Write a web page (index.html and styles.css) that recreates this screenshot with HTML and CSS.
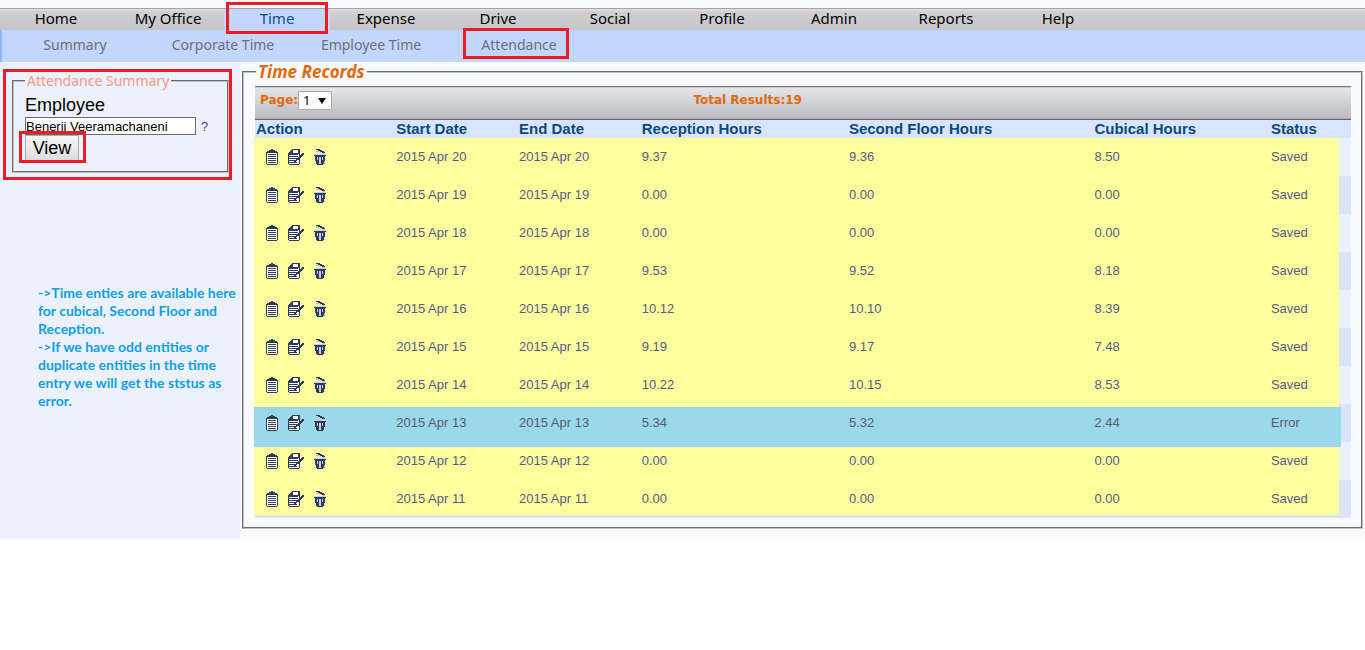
FILE: index.html
```html
<!DOCTYPE html>
<html lang="en">
<head>
<meta charset="utf-8">
<title>Time Records</title>
<link rel="stylesheet" href="styles.css">
</head>
<body>
<svg class="sprite" aria-hidden="true">
  <symbol id="i-view" viewBox="0 0 12 16">
    <path fill="#2f3b58" d="M5 0h2v1h2v1h2v1h1v12h-1v1H1v-1H0V3h1V2h2V1h2z"/>
    <path fill="#fff" d="M1 4h10v11H1z"/>
    <path fill="#2f3b58" d="M2 5h8v1H2zM2 7h8v1H2zM2 9h8v1H2zM2 11h8v1H2zM2 13h8v1H2z"/>
  </symbol>
  <symbol id="i-edit" viewBox="0 0 16 16">
    <path fill="#2f3b58" d="M4 0h8v15h-1v1H1v-1H0V4h1V3h1V2h1V1h1z"/>
    <path fill="#fff" d="M5 1h5v3H5zM1 5h10v10H1z"/>
    <path fill="#2f3b58" d="M1 5h9v1H1zM1 7h9v1H1zM1 9h8v1H1zM1 11h6v1H1zM1 13h8v1H1z"/>
    <path fill="#2f3b58" d="M14 4h2v2h-1v1h-1v1h-1v1h-1v1h-1v1H9v1H8v1H6v-1h1v-1h1v-1h1V9h1V8h1V7h1V6h1V5h1z"/>
  </symbol>
  <symbol id="i-delete" viewBox="0 0 12 16">
    <path fill="#c3cbe0" d="M2 1h2v1h2v1h3v1h2v1H8V4H5V3H2zM0 5h12v1H0zM1 8h10v7H2z"/>
    <path fill="#2f3b58" d="M2 0h4v1h2v1h2v1h1v1H8V3H6V2H4V1H2zM0 6h12v1h-1v1H1V7H0zM1 8h2v3h1v4H2v-3H1zM4 8h1v7H4zM7 8h1v7H7zM9 8h2v4h-1v3H8v-4h1zM3 15h6v1H3z"/>
  </symbol>
</svg>
<div class="app">
  <nav class="menu" aria-label="Main">
    <a href="#">Home</a>
    <a href="#">My Office</a>
    <a href="#" class="active">Time<span class="callout callout-time"></span></a>
    <a href="#">Expense</a>
    <a href="#">Drive</a>
    <a href="#">Social</a>
    <a href="#">Profile</a>
    <a href="#">Admin</a>
    <a href="#">Reports</a>
    <a href="#">Help</a>
  </nav>
  <nav class="submenu" aria-label="Time">
    <a href="#">Summary</a>
    <a href="#">Corporate Time</a>
    <a href="#">Employee Time</a>
    <a href="#">Attendance<span class="callout callout-attendance"></span></a>
  </nav>
  <div class="content">
    <aside class="sidebar">
      <form class="search">
        <fieldset class="panel search-panel">
          <legend>Attendance Summary</legend>
          <label for="employee">Employee</label>
          <div class="field">
            <input id="employee" type="text" value="Benerji Veeramachaneni">
            <a href="#" class="help">?</a>
          </div>
          <div class="submit">
            <button type="button">View</button>
            <span class="callout callout-view"></span>
          </div>
        </fieldset>
        <span class="callout callout-search"></span>
      </form>
      <div class="notes">
        <p>-&gt;Time enties are available here for cubical, Second Floor and Reception.</p>
        <p>-&gt;If we have odd entities or duplicate entities in the time entry we will get the ststus as error.</p>
      </div>
    </aside>
    <main class="main">
      <fieldset class="panel records">
        <legend>Time Records</legend>
        <div class="toolbar">
          <div class="pager">
            <label for="page">Page:</label>
            <span class="select"><select id="page"><option>1</option><option>2</option></select></span>
          </div>
          <div>Total Results:19</div>
        </div>
        <div class="grid">
          <div class="mark mark-all"></div>
          <div class="mark mark-error"></div>
          <table>
            <colgroup>
              <col class="c-action"><col class="c-start"><col class="c-end"><col class="c-reception"><col class="c-second"><col class="c-cubical"><col>
            </colgroup>
            <thead>
              <tr><th>Action</th><th>Start Date</th><th>End Date</th><th>Reception Hours</th><th>Second Floor Hours</th><th>Cubical Hours</th><th>Status</th></tr>
            </thead>
            <tbody id="rows"></tbody>
          </table>
        </div>
      </fieldset>
    </main>
  </div>
</div>
<script src="records.js"></script>
</body>
</html>
```
FILE: records.js
```js
const records = [
  ["2015 Apr 20", "9.37", "9.36", "8.50", "Saved"],
  ["2015 Apr 19", "0.00", "0.00", "0.00", "Saved"],
  ["2015 Apr 18", "0.00", "0.00", "0.00", "Saved"],
  ["2015 Apr 17", "9.53", "9.52", "8.18", "Saved"],
  ["2015 Apr 16", "10.12", "10.10", "8.39", "Saved"],
  ["2015 Apr 15", "9.19", "9.17", "7.48", "Saved"],
  ["2015 Apr 14", "10.22", "10.15", "8.53", "Saved"],
  ["2015 Apr 13", "5.34", "5.32", "2.44", "Error"],
  ["2015 Apr 12", "0.00", "0.00", "0.00", "Saved"],
  ["2015 Apr 11", "0.00", "0.00", "0.00", "Saved"]
];
const icon = (name, width) =>
  `<button type="button" aria-label="${name}"><svg width="${width}" height="16"><use href="#i-${name}"/></svg></button>`;
document.getElementById("rows").innerHTML = records.map(([date, ...rest]) =>
  `<tr class="${rest[3].toLowerCase()}"><td><div class="actions">${icon("view", 12)}${icon("edit", 16)}${icon("delete", 12)}</div></td>` +
  [date, date, ...rest].map(v => `<td>${v}</td>`).join("") + "</tr>").join("");
```
FILE: styles.css
```css
* { box-sizing: border-box; }
body {
  margin: 0;
  background: #fff;
  font-family: "Liberation Sans", Arial, sans-serif;
  color: #000;
}
a { text-decoration: none; color: inherit; }
.sprite { display: none; }
.app { background: #fafbff; padding-top: 8px; }

.menu {
  display: flex;
  height: 22px;
  border-top: 1px solid #a5a5a7;
  background: linear-gradient(#dcdcde 0, #dcdcde 2px, #d0d0d3 2px, #c6c6ca 100%);
  font: 15px/18px "Noto Sans", Tahoma, sans-serif;
}
.menu a {
  position: relative;
  width: 112px;
  text-align: center;
}
.menu .active { width: 106px; background: #c3d6ff; color: #0f4f86; }

.submenu {
  display: flex;
  height: 32px;
  padding-left: 1px;
  background: linear-gradient(90deg, #7fa6f8, #c3d6ff 3px);
  font: 14px/30px "Noto Sans", Tahoma, sans-serif;
  color: #6b6f78;
}
.submenu a {
  position: relative;
  width: 148px;
  text-align: center;
}

.callout {
  position: absolute;
  border: 3px solid #ed1c24;
  pointer-events: none;
}
.callout-time { inset: -7px 2px -4px 2px; z-index: 3; }
.callout-attendance { inset: -2px 24px 3px 18px; z-index: 3; }
.callout-search { inset: 0; }
.callout-view { inset: -4px -7px -1px -6px; }

.content { display: flex; }
.sidebar {
  flex: 0 0 240px;
  background: #edf1fd;
  padding: 7px 0 0 3px;
}
.panel {
  margin: 0;
  min-width: 0;
  border: 2px groove #c0c0c0;
}
.search {
  position: relative;
  width: 229px;
  padding: 3px 3px 7px 9px;
}
.search-panel { padding: 3px 11px 8px; height: 101px; }
.search-panel legend {
  padding: 0 2px;
  font: 14px/18px "Noto Sans", Tahoma, sans-serif;
  color: #f39a7e;
}
.search-panel label { display: block; font-size: 18px; line-height: 24px; }
.field { display: flex; align-items: center; gap: 5px; }
.field input {
  width: 171px;
  height: 18px;
  padding: 0;
  border: 1px solid #6b6b6b;
  background: #fff;
  font: 13px "Liberation Sans", Arial, sans-serif;
}
.help { font-size: 13px; color: #3b4a8c; }
.submit { position: relative; width: 54px; }
.submit button {
  display: block;
  width: 54px;
  height: 27px;
  padding: 0;
  border: 1px solid #a9a9a9;
  background: linear-gradient(#f6f6f6, #dcdcdc);
  font: 18px "Liberation Sans", Arial, sans-serif;
}
.notes {
  padding: 104px 0 0 35px;
  font: bold 14px/18px Lato, Calibri, sans-serif;
  color: #109fe6;
}
.notes p { margin: 0; }

.main { flex: 1; min-width: 0; padding: 0 2px 10px 2px; }
.records { padding: 4px 10px 9px 11px; }
.records legend {
  padding: 0 2px;
  margin-left: 1px;
  font: italic bold 17px/20px "Noto Sans", Tahoma, sans-serif;
  color: #e16a0a;
}
.toolbar {
  display: grid;
  grid-template-columns: 40% 1fr;
  height: 34px;
  border-top: 1px solid #77777b;
  border-bottom: 1px solid #67676b;
  box-shadow: inset 0 1px #c8c8cc, inset 0 -1px #a9a9ae;
  background: linear-gradient(#e6e7eb, #babbc0);
  font: bold 12px/26px "DejaVu Sans", Verdana, sans-serif;
  color: #e16a0a;
}
.pager { display: flex; align-items: center; height: 26px; padding-left: 5px; }
.select { position: relative; display: flex; }
.select::after {
  content: "";
  position: absolute;
  top: 7px;
  right: 6px;
  border: solid transparent;
  border-width: 6px 4px 0;
  border-top-color: #000;
  pointer-events: none;
}
.select select {
  appearance: none;
  width: 34px;
  height: 19px;
  padding: 0 4px;
  border: 1px solid #a9a9a9;
  border-radius: 1px;
  background: #fff;
  font: 13px/16px "Noto Sans", Tahoma, sans-serif;
}

.grid { position: relative; }
.grid table { width: 100%; border-collapse: collapse; table-layout: fixed; }
.c-action { width: 12.8%; }
.c-start { width: 11.2%; }
.c-end { width: 11.2%; }
.c-reception { width: 18.9%; }
.c-second { width: 22.4%; }
.c-cubical { width: 16.1%; }
.grid th {
  height: 18px;
  padding: 0 0 0 1px;
  background: #d9e4ff;
  text-align: left;
  white-space: nowrap;
  font-size: 15px;
  line-height: 18px;
  color: #0b4a7d;
}
.grid td {
  position: relative;
  z-index: 2;
  height: 38px;
  padding: 0 0 0 1px;
  font-size: 13px;
  line-height: 16px;
  color: #535b88;
}
.grid tbody tr { background: #edf1fd; }
.grid tbody tr:nth-child(even) { background: #d9e4ff; }
.grid .error td { color: #5c5a6e; }
.actions { display: flex; gap: 10px; padding-left: 10px; }
.actions button {
  display: flex;
  padding: 0;
  border: 0;
  background: none;
}
.mark { position: absolute; z-index: 1; left: -1px; }
.mark-all { top: 18px; right: 12px; bottom: 3px; background: #ffff9e; }
.mark-error { top: 287px; right: 10px; height: 40px; background: #99d9ea; }
```
